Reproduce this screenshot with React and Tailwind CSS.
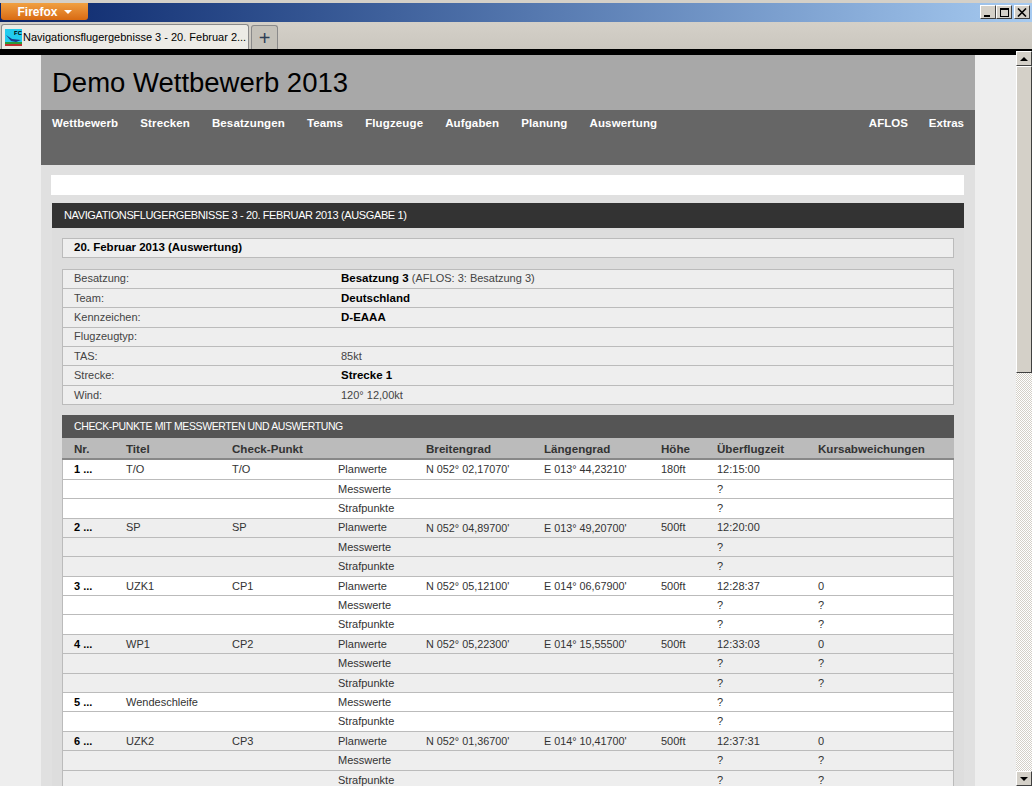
import React from 'react';

const navLeft = ['Wettbewerb', 'Strecken', 'Besatzungen', 'Teams', 'Flugzeuge', 'Aufgaben', 'Planung', 'Auswertung'];

const infoRows = [
  ['Besatzung:', <><b className="text-black text-[11.5px]">Besatzung 3</b> (AFLOS: 3: Besatzung 3)</>],
  ['Team:', <b className="text-black text-[11.5px]">Deutschland</b>],
  ['Kennzeichen:', <b className="text-black text-[11.5px]">D-EAAA</b>],
  ['Flugzeugtyp:', ''],
  ['TAS:', '85kt'],
  ['Strecke:', <b className="text-black text-[11.5px]">Strecke 1</b>],
  ['Wind:', '120° 12,00kt'],
];

const points = [
  { nr: '1 ...', title: 'T/O', cp: 'T/O', lat: 'N 052° 02,17070\'', lon: 'E 013° 44,23210\'', alt: '180ft', time: '12:15:00', dev: '', q: '' },
  { nr: '2 ...', title: 'SP', cp: 'SP', lat: 'N 052° 04,89700\'', lon: 'E 013° 49,20700\'', alt: '500ft', time: '12:20:00', dev: '', q: '' },
  { nr: '3 ...', title: 'UZK1', cp: 'CP1', lat: 'N 052° 05,12100\'', lon: 'E 014° 06,67900\'', alt: '500ft', time: '12:28:37', dev: '0', q: '?' },
  { nr: '4 ...', title: 'WP1', cp: 'CP2', lat: 'N 052° 05,22300\'', lon: 'E 014° 15,55500\'', alt: '500ft', time: '12:33:03', dev: '0', q: '?' },
  { nr: '5 ...', title: 'Wendeschleife', cp: '', q: '', noPlan: true },
  { nr: '6 ...', title: 'UZK2', cp: 'CP3', lat: 'N 052° 01,36700\'', lon: 'E 014° 10,41700\'', alt: '500ft', time: '12:37:31', dev: '0', q: '?' },
];

const cols = 'grid grid-cols-[52px_106px_106px_88px_118px_117px_56px_101px_1fr]';

const Row = ({ cells, bg }) => (
  <div className={`${cols} ${bg} pl-[11px] h-[19.4px] items-center border-b border-[#bbbbbb] text-[#333333]`}>
    {cells.map((c, i) => (
      <div key={i} className={i === 0 ? 'font-bold text-black' : i === 4 || i === 5 ? 'text-[10.8px]' : ''}>{c}</div>
    ))}
  </div>
);

const PointRows = ({ p, bg }) => {
  if (p.noPlan) {
    return (
      <>
        <Row bg={bg} cells={[p.nr, p.title, '', 'Messwerte', '', '', '', '?', '']} />
        <Row bg={bg} cells={['', '', '', 'Strafpunkte', '', '', '', '?', '']} />
      </>
    );
  }
  return (
    <>
      <Row bg={bg} cells={[p.nr, p.title, p.cp, 'Planwerte', p.lat, p.lon, p.alt, p.time, p.dev]} />
      <Row bg={bg} cells={['', '', '', 'Messwerte', '', '', '', '?', p.q]} />
      <Row bg={bg} cells={['', '', '', 'Strafpunkte', '', '', '', '?', p.q]} />
    </>
  );
};

const WinButton = ({ children, className = 'w-[16px] h-[14px]' }) => (
  <div className={`bg-[#d4d0c8] border border-t-white border-l-white border-r-[#404040] border-b-[#404040] flex items-center justify-center shrink-0 ${className}`}>
    {children}
  </div>
);

const Favicon = () => (
  <svg width="17" height="17" viewBox="0 0 17 17" className="shrink-0">
    <rect width="17" height="17" fill="#22ccee" />
    <rect y="13" width="17" height="2" fill="#2a9a3a" />
    <rect y="15" width="17" height="2" fill="#c03030" />
    <path d="M1 6l6 4 9 1-5 2-5-1z" fill="#1a3a8a" />
    <text x="9" y="6" fontSize="6" fontWeight="bold" fontFamily="Liberation Sans" fill="#000">FC</text>
  </svg>
);

const Scrollbar = () => (
  <div className="w-[16px] shrink-0 flex flex-col bg-[repeating-conic-gradient(#d4d0c8_0_25%,#ffffff_0_50%)] bg-[length:2px_2px]">
    <WinButton className="w-[16px] h-[15px]">
      <div className="w-0 h-0 border-x-[4px] border-x-transparent border-b-[4px] border-b-black" />
    </WinButton>
    <div className="h-[307px] bg-[#d4d0c8] border border-t-white border-l-white border-r-[#404040] border-b-[#404040]" />
    <div className="flex-1" />
    <WinButton className="w-[16px] h-[15px]">
      <div className="w-0 h-0 border-x-[4px] border-x-transparent border-t-[4px] border-t-black" />
    </WinButton>
  </div>
);

export default function App() {
  return (
    <div className="w-[1032px] h-[786px] overflow-hidden flex flex-col bg-[#eeeeee] font-['Liberation_Sans',Arial,sans-serif] text-[11px]">
      {/* browser chrome */}
      <div className="h-[22px] shrink-0 bg-[#d4d0c8] pt-[3px]">
        <div className="h-[19px] bg-gradient-to-r from-[#0a246a] to-[#a6caf0] flex justify-between">
          <div className="w-[87px] h-[17px] ml-px bg-gradient-to-b from-[#f0a040] to-[#d86a10] rounded-b-[3px] flex items-center justify-center gap-[6px] text-white font-bold text-[12px]">
            Firefox
            <div className="w-0 h-0 border-x-[4px] border-x-transparent border-t-[4px] border-t-white" />
          </div>
          <div className="flex items-center mr-[2px] pb-px">
            <WinButton>
              <div className="w-[6px] h-[2px] bg-black mt-[7px] -ml-[3px]" />
            </WinButton>
            <WinButton>
              <div className="w-[9px] h-[9px] border border-t-2 border-black" />
            </WinButton>
            <WinButton className="w-[16px] h-[14px] ml-[2px]">
              <svg width="10" height="9" viewBox="0 0 10 9">
                <path d="M1 0.5l8 8M9 0.5l-8 8" stroke="#000" strokeWidth="1.6" fill="none" />
              </svg>
            </WinButton>
          </div>
        </div>
      </div>
      <div className="h-[27px] shrink-0 bg-gradient-to-b from-[#d4d0c8] to-[#cbc7bf] flex items-end pl-px">
        <div className="w-[248px] h-[25px] bg-[#ecebe6] border border-b-0 border-[#8a8a8a] rounded-t-[3px] flex items-center gap-[1px] pl-[3px] text-[11px] text-black whitespace-nowrap overflow-hidden">
          <Favicon />
          Navigationsflugergebnisse 3 - 20. Februar 2...
        </div>
        <div className="w-[27px] h-[24px] ml-[2px] bg-[#c4c1b9] border border-b-0 border-[#8a8a8a] rounded-t-[3px] flex items-center justify-center text-[20px] leading-none text-[#2f3f55]">
          +
        </div>
      </div>
      <div className="h-[2px] shrink-0 bg-black" />

      <div className="flex flex-1 min-h-0">
        <div className="flex-1 min-w-0 flex flex-col overflow-hidden">
          <div className="h-[4px] shrink-0 bg-black" />
          <div className="ml-[41px] w-[934px] bg-[#e0e0e0]">
            <div className="h-[55px] bg-[#a8a8a8] pl-[11px] flex items-center text-[27.5px] text-black">
              Demo Wettbewerb 2013
            </div>
            <div className="h-[55px] bg-[#666666] px-[11px] pt-[5px] flex justify-between text-white font-bold text-[11.5px]">
              <div className="flex gap-[22px] tracking-[0.13px]">
                {navLeft.map((n) => <span key={n}>{n}</span>)}
              </div>
              <div className="flex gap-[21px]">
                <span>AFLOS</span>
                <span>Extras</span>
              </div>
            </div>

            <div className="ml-[10px] mr-[11px] pt-[10px]">
              <div className="h-[20px] bg-white" />
              <div className="mt-[8px] ml-px bg-[#dddddd]">
                <div className="h-[25px] bg-[#333333] text-white flex items-center pl-3 text-[11px] tracking-[-0.38px]">
                  NAVIGATIONSFLUGERGEBNISSE 3 - 20. FEBRUAR 2013 (AUSGABE 1)
                </div>
                <div className="px-[10px] pt-[10px]">
                  <div className="h-[20px] bg-[#eeeeee] border border-[#bbbbbb] flex items-center pl-[11px] font-bold text-[11.5px] text-black">
                    20. Februar 2013 (Auswertung)
                  </div>

                  <div className="mt-[10.5px] border border-b-0 border-[#bbbbbb] bg-[#eeeeee]">
                    {infoRows.map(([label, value]) => (
                      <div key={label} className="grid grid-cols-[267px_1fr] pl-[11px] h-[19.4px] items-center leading-[13px] border-b border-[#bbbbbb] text-[#444444]">
                        <div>{label}</div>
                        <div>{value}</div>
                      </div>
                    ))}
                  </div>

                  <div className="mt-[10px] h-[23px] bg-[#555555] text-white flex items-center pl-3 text-[10.5px] tracking-[-0.39px]">
                    CHECK-PUNKTE MIT MESSWERTEN UND AUSWERTUNG
                  </div>
                  <div className={`${cols} pl-3 h-[22px] pt-px items-center bg-[#bbbbbb] border-b-2 border-[#888888] font-bold text-[11.6px] text-[#333333]`}>
                    {['Nr.', 'Titel', 'Check-Punkt', '', 'Breitengrad', 'Längengrad', 'Höhe', 'Überflugzeit', 'Kursabweichungen'].map((h, i) => (
                      <div key={i} className="whitespace-nowrap">{h}</div>
                    ))}
                  </div>
                  <div className="mt-[0.1px] border-x border-[#bbbbbb]">
                    {points.map((p, i) => (
                      <PointRows key={p.nr} p={p} bg={i % 2 === 0 ? 'bg-white' : 'bg-[#eeeeee]'} />
                    ))}
                  </div>
                </div>
              </div>
            </div>
          </div>
        </div>
        <Scrollbar />
      </div>
    </div>
  );
}
